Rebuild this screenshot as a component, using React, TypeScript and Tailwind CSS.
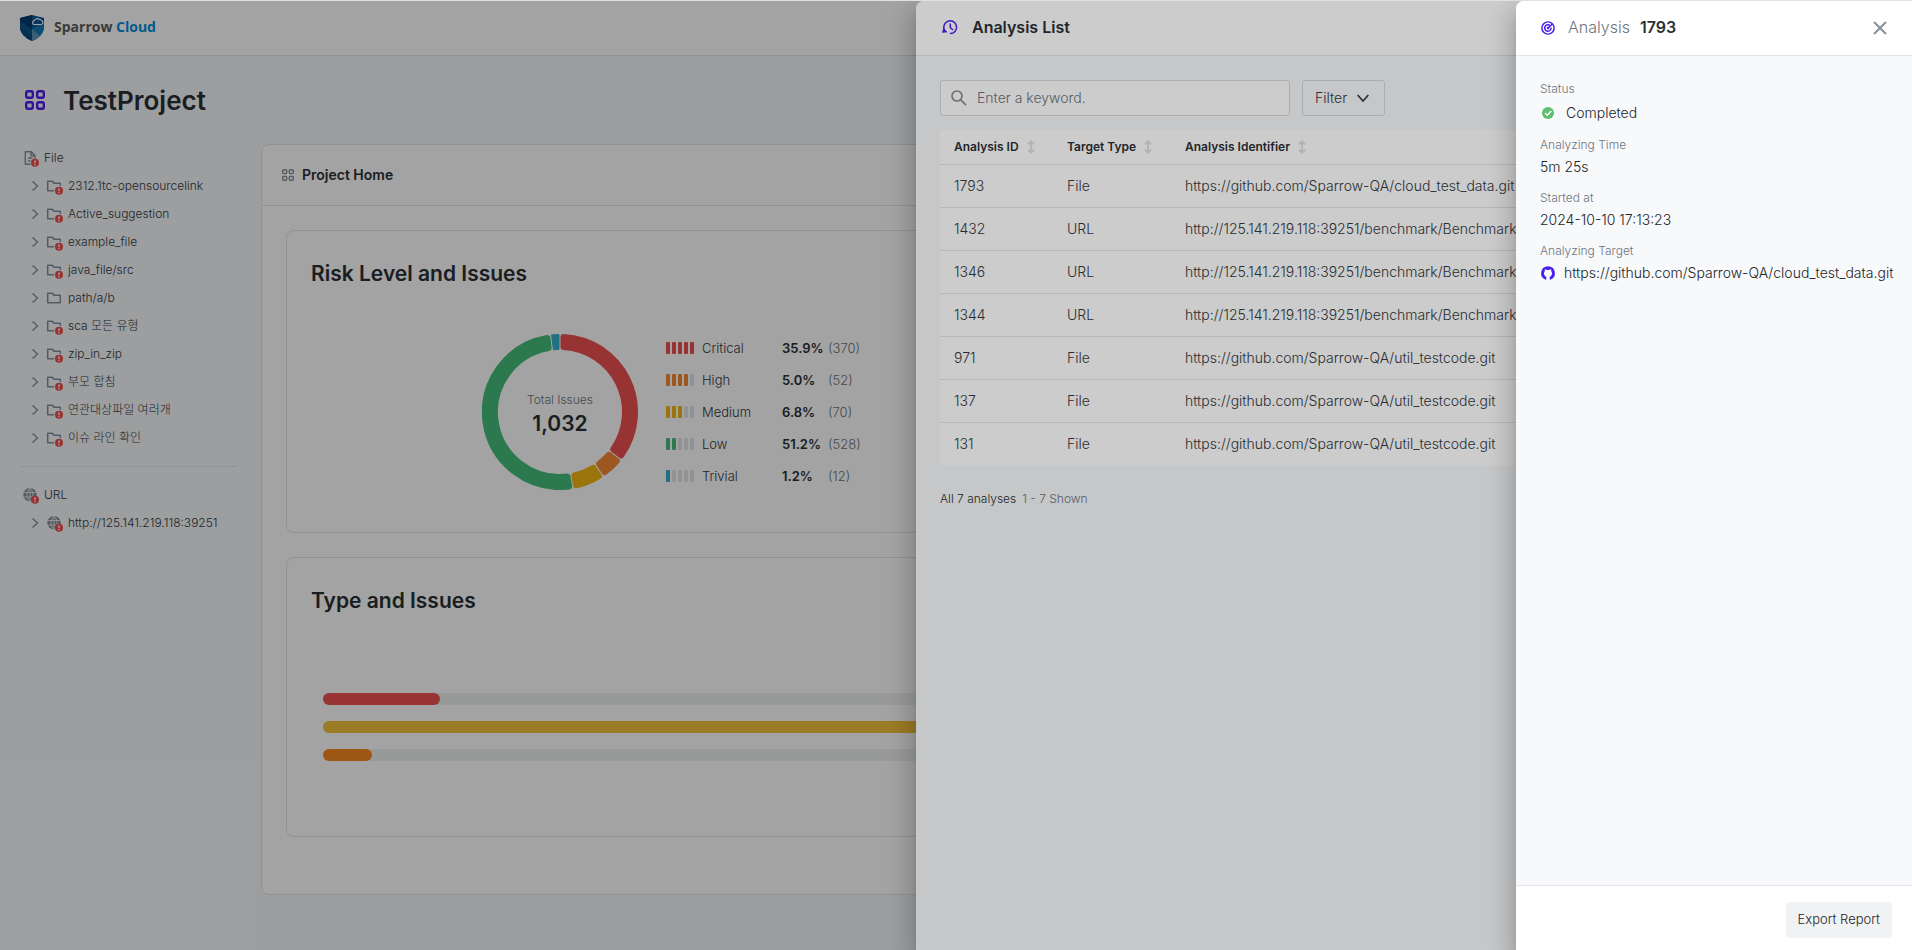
import React from 'react';

type Level = { name: string; pct: string; count: number; fill: number; color: string; bg: string };

const levels: Level[] = [
  { name: 'Critical', pct: '35.9%', count: 370, fill: 5, color: '#ef5152', bg: 'bg-[#ef5152]' },
  { name: 'High', pct: '5.0%', count: 52, fill: 4, color: '#f88935', bg: 'bg-[#f88935]' },
  { name: 'Medium', pct: '6.8%', count: 70, fill: 3, color: '#f3b814', bg: 'bg-[#f3b814]' },
  { name: 'Low', pct: '51.2%', count: 528, fill: 2, color: '#47bf7c', bg: 'bg-[#47bf7c]' },
  { name: 'Trivial', pct: '1.2%', count: 12, fill: 1, color: '#35b2cd', bg: 'bg-[#35b2cd]' },
];

const folders = [
  { name: '2312.1tc-opensourcelink', alert: true },
  { name: 'Active_suggestion', alert: true },
  { name: 'example_file', alert: true },
  { name: 'java_file/src', alert: true },
  { name: 'path/a/b', alert: false },
  { name: 'sca 모든 유형', alert: true },
  { name: 'zip_in_zip', alert: true },
  { name: '부모 합침', alert: true },
  { name: '연관대상파일 여러개', alert: true },
  { name: '이슈 라인 확인', alert: true },
];

const analyses = [
  { id: 1793, type: 'File', target: 'https://github.com/Sparrow-QA/cloud_test_data.git' },
  { id: 1432, type: 'URL', target: 'http://125.141.219.118:39251/benchmark/BenchmarkT' },
  { id: 1346, type: 'URL', target: 'http://125.141.219.118:39251/benchmark/BenchmarkT' },
  { id: 1344, type: 'URL', target: 'http://125.141.219.118:39251/benchmark/BenchmarkT' },
  { id: 971, type: 'File', target: 'https://github.com/Sparrow-QA/util_testcode.git' },
  { id: 137, type: 'File', target: 'https://github.com/Sparrow-QA/util_testcode.git' },
  { id: 131, type: 'File', target: 'https://github.com/Sparrow-QA/util_testcode.git' },
];

function Logo() {
  return (
    <svg viewBox="0 0 24 26" className="h-[26px] w-6" aria-hidden="true">
      <path d="M12 0 24 3v9c0 6-5 11-12 14C5 23 0 18 0 12V3z" fill="#0a5796" />
      <path d="M12 0v14L0 6V3z" fill="#053c6d" />
      <path d="M12 14 24 7v5c0 6-5 11-12 14z" fill="#1379b8" />
      <path d="M0 6l12 8v12C5 23 0 18 0 12z" fill="#074a80" />
      <path d="M12 14l8 7c-2 2-5 4-8 5z" fill="#5f93b5" />
      <path d="M1 8l11 9M1 11l10 8" stroke="#2b79ac" strokeWidth=".6" />
      <path d="M14 9.500h7a2 2 0 0 0 .5-3.900 2.300 2.300 0 0 0-2.500-1.300 3 3 0 0 0-4.700 1.300 2 2 0 0 0-.3 3.900z" fill="#0a5796" stroke="#fff" strokeWidth="1.100" />
    </svg>
  );
}

function GridIcon({ className, width }: { className: string; width: number }) {
  return (
    <svg viewBox="0 0 20 20" fill="none" stroke="currentColor" strokeWidth={width} className={className} aria-hidden="true">
      <rect x="1.200" y="1.200" width="6.600" height="6.600" rx="1.800" />
      <rect x="12.200" y="1.200" width="6.600" height="6.600" rx="1.800" />
      <rect x="1.200" y="12.200" width="6.600" height="6.600" rx="1.800" />
      <rect x="12.200" y="12.200" width="6.600" height="6.600" rx="1.800" />
    </svg>
  );
}

function Alert({ x }: { x: number }) {
  return (
    <g>
      <circle cx={x} cy="12.800" r="4" fill="#f04a4b" />
      <path d={`M${x} 10.300v3M${x} 14v1.200`} stroke="#fff" strokeWidth="1.300" />
    </g>
  );
}

function FolderIcon({ alert }: { alert: boolean }) {
  return (
    <svg viewBox="0 0 16 16" fill="none" className="size-4 overflow-visible text-[#868e96]" aria-hidden="true">
      {alert ? (
        <path d="M8 12.800H1.700V3.200h4.600l1.500 2.100h6.500v2.500" stroke="currentColor" strokeWidth="1.500" strokeLinejoin="round" />
      ) : (
        <path d="M1.700 3.200h4.600l1.500 2.100h6.500v7.500H1.700z" stroke="currentColor" strokeWidth="1.500" strokeLinejoin="round" />
      )}
      {alert && <Alert x={13} />}
    </svg>
  );
}

function FileIcon() {
  return (
    <svg viewBox="0 0 16 16" fill="none" className="size-4 overflow-visible text-[#868e96]" aria-hidden="true">
      <path d="M6.500 14.300H1.300V1.800h6L11 5.500v3M7 1.800v4h4M4 8h4.500M4 11h2.500" stroke="currentColor" strokeWidth="1.400" strokeLinejoin="round" />
      <Alert x={11} />
    </svg>
  );
}

function GlobeIcon({ x }: { x: number }) {
  return (
    <svg viewBox="0 0 16 16" fill="none" className="size-4 overflow-visible text-[#868e96]" aria-hidden="true">
      <g transform={`translate(${x - 5} 0)`}>
        <circle cx="0" cy="7.800" r="6.700" fill="currentColor" />
        <path d="M-6 5.500H6M-6 10H6M0 1v13.500M0 1.200c-4 3-4 10.200 0 13.300M0 1.200c4 3 4 10.200 0 13.300" stroke="#f6f8fa" strokeWidth=".8" />
      </g>
      <Alert x={x} />
    </svg>
  );
}

function Chevron({ className }: { className: string }) {
  return (
    <svg viewBox="0 0 10 10" fill="none" stroke="currentColor" strokeWidth="1.400" className={className} aria-hidden="true">
      <path d="M2.500.5 7.500 5 2.500 9.500" />
    </svg>
  );
}

function SortIcon() {
  return (
    <svg viewBox="0 0 8 14" fill="none" stroke="currentColor" strokeWidth="1.900" className="h-3.5 w-2 text-[#dee1e5]" aria-hidden="true">
      <path d="M4 1.500v11M1 4.300l3-3 3 3M1 9.700l3 3 3-3" />
    </svg>
  );
}

const C = 78;
function polar(r: number, deg: number) {
  const a = ((deg - 90) * Math.PI) / 180;
  return `${(C + r * Math.cos(a)).toFixed(2)} ${(C + r * Math.sin(a)).toFixed(2)}`;
}

/* Ring segment drawn inset by the corner radius and grown back by a round stroke. */
function segment(start: number, end: number, round: number) {
  const ro = 78 - round;
  const ri = 62 + round;
  const inset = (r: number) => (((round + 0.5) / r) * 180) / Math.PI;
  const large = (r: number) => (end - start - 2 * inset(r) > 180 ? 1 : 0);
  return `M${polar(ro, start + inset(ro))}A${ro} ${ro} 0 ${large(ro)} 1 ${polar(ro, end - inset(ro))}L${polar(ri, end - inset(ri))}A${ri} ${ri} 0 ${large(ri)} 0 ${polar(ri, start + inset(ri))}Z`;
}

/* Small shares are widened to a minimum angle so that they stay visible. */
const MIN_ANGLE = 7;

function Donut() {
  const total = levels.reduce((n, l) => n + l.count, 0);
  const raw = levels.map((l) => Math.max((l.count / total) * 360, MIN_ANGLE));
  const sum = raw.reduce((n, a) => n + a, 0);
  let at = 0;
  return (
    <svg viewBox="0 0 156 156" className="size-[156px]" role="img" aria-label="Total Issues 1,032">
      {levels.map((l, i) => {
        const start = at;
        at += (raw[i] / sum) * 360;
        const round = l.count < 20 ? 0.5 : 3;
        return (
          <path key={l.name} d={segment(start, at, round)} fill={l.color} stroke={l.color} strokeWidth={round * 2} strokeLinejoin="round" />
        );
      })}
    </svg>
  );
}

function Sidebar() {
  return (
    <nav className="flex w-[217px] shrink-0 flex-col text-xs font-light text-[#343a40]">
      <div className="flex h-7 items-center gap-1 pl-1">
        <FileIcon />
        <span>File</span>
      </div>
      <ul>
        {folders.map((f) => (
          <li key={f.name}>
            <a href="#" className="flex h-7 items-center pl-2.5">
              <Chevron className="mr-1.5 size-2.5 text-[#868e96]" />
              <FolderIcon alert={f.alert} />
              <span className="ml-1.5">{f.name}</span>
            </a>
          </li>
        ))}
      </ul>
      <hr className="my-3.5 border-[#e3e5e8]" />
      <div className="flex h-7 items-center gap-1 pl-1">
        <GlobeIcon x={11} />
        <span>URL</span>
      </div>
      <a href="#" className="flex h-7 items-center pl-2.5">
        <Chevron className="mr-1.5 size-2.5 text-[#868e96]" />
        <GlobeIcon x={13} />
        <span className="ml-1.5">http://125.141.219.118:39251</span>
      </a>
    </nav>
  );
}

function ProjectPage() {
  return (
    <div className="flex min-h-screen flex-col bg-[#f6f8fa] pb-[55px]">
      <header className="flex h-14 items-center gap-2.5 border-b border-[#e3e5e8] bg-white pl-5">
        <Logo />
        <span className="pb-0.5 font-['Open_Sans',sans-serif] text-sm font-bold text-[#5c5c5c]">
          Sparrow <span className="text-[#0090dc]">Cloud</span>
        </span>
      </header>
      <div className="flex h-[88px] items-center gap-[18px] pl-[25px]">
        <GridIcon className="size-5 text-[#4c1ff0]" width={2.4} />
        <h1 className="text-[26px] font-semibold text-[#2b3035]">TestProject</h1>
      </div>
      <div className="flex flex-1 gap-6 pl-5">
        <Sidebar />
        <main className="min-w-0 flex-1 rounded-l-lg border border-[#e3e5e8] bg-white">
          <div className="flex h-[61px] items-center gap-2 border-b border-[#e3e5e8] pl-5">
            <GridIcon className="size-3 text-[#868e96]" width={2.3} />
            <h2 className="text-sm font-semibold text-[#2b3035]">Project Home</h2>
          </div>
          <div className="flex flex-col gap-6 p-6">
            <section className="h-[303px] rounded-lg border border-[#e3e5e8] px-6 pt-[27px]">
              <h3 className="text-[21px] leading-8 font-semibold text-[#2b3035]">Risk Level and Issues</h3>
              <div className="mt-[42px] flex items-center gap-7 pl-[171px]">
                <div className="grid size-[156px] place-items-center">
                  <div className="col-start-1 row-start-1"><Donut /></div>
                  <div className="col-start-1 row-start-1 pt-1 text-center">
                    <p className="text-xs leading-5 font-light text-[#6c757d]">Total Issues</p>
                    <p className="text-[21px] leading-7 font-semibold text-[#2b3035]">1,032</p>
                  </div>
                </div>
                <ul className="text-[13px] leading-8 font-light text-[#343a40]">
                  {levels.map((l) => (
                    <li key={l.name} className="flex items-center">
                      <span className="flex gap-0.5">
                        {[0, 1, 2, 3, 4].map((i) => (
                          <span key={i} className={`h-3 w-1 rounded-[1px] ${i < l.fill ? l.bg : 'bg-[#e3e5e8]'}`} />
                        ))}
                      </span>
                      <span className="ml-2 w-20">{l.name}</span>
                      <span className="w-[46px] font-semibold text-[#2b3035]">{l.pct}</span>
                      <span className="text-[#6c757d]">({l.count})</span>
                    </li>
                  ))}
                </ul>
              </div>
            </section>
            <section className="h-[280px] rounded-lg border border-[#e3e5e8] px-6 pt-[27px]">
              <h3 className="text-[21px] leading-8 font-semibold text-[#2b3035]">Type and Issues</h3>
              <div className="mt-[76px] flex flex-col gap-4 px-3">
                <div className="h-3 rounded-md bg-[#eff2f0]"><div className="h-3 w-[117px] rounded-md bg-[#ef5152]" /></div>
                <div className="h-3 rounded-md bg-[#eff2f0]"><div className="h-3 w-3/4 rounded-md bg-[#f3c23d]" /></div>
                <div className="h-3 rounded-md bg-[#eff2f0]"><div className="h-3 w-[49px] rounded-md bg-[#f88720]" /></div>
              </div>
            </section>
          </div>
        </main>
      </div>
    </div>
  );
}

const drawerShadow = 'shadow-[0_8px_10px_-5px_rgba(0,0,0,0.2),0_16px_24px_2px_rgba(0,0,0,0.14),0_6px_30px_5px_rgba(0,0,0,0.12)]';

function AnalysisList() {
  return (
    <section className={`ml-auto flex h-full w-[996px] flex-col overflow-hidden rounded-tl-lg bg-[#f8f9fb] ${drawerShadow}`}>
      <header className="flex h-[55px] shrink-0 items-center gap-3.5 border-b border-[#e3e5e8] bg-white pb-0.5 pl-[26px]">
        <svg viewBox="0 0 16 16" fill="none" stroke="currentColor" strokeWidth="1.500" className="size-4 text-[#4c1ff0]" aria-hidden="true">
          <path d="M2.700 11.500A6.400 6.400 0 1 1 8 14.600" />
          <path d="M0 13.800 1.400 9 5.600 13.200z" fill="currentColor" stroke="none" />
          <path d="M8.300 4.500V8.500L11 11" />
        </svg>
        <h2 className="text-base font-semibold text-[#2b3035]">Analysis List</h2>
      </header>
      <div className="flex flex-col px-6 pt-6">
        <div className="flex gap-3">
          <label className="flex h-9 w-[350px] items-center gap-2 rounded-[3px] border border-[#d5d9dd] bg-white pl-2">
            <svg viewBox="0 0 16 16" fill="none" stroke="currentColor" strokeWidth="1.700" className="mx-0.5 size-4 text-[#868e96]" aria-hidden="true">
              <circle cx="6" cy="6" r="5" />
              <path d="m9.800 9.800 5.200 5.400" />
            </svg>
            <input aria-label="Keyword" placeholder="Enter a keyword." className="min-w-0 flex-1 bg-transparent text-sm font-light outline-none placeholder:text-[#6c757d]" />
          </label>
          <button type="button" className="flex h-9 w-[83px] items-center justify-between rounded-[3px] border border-[#d5d9dd] pr-[15px] pl-3 text-sm font-light text-[#343a40]">
            Filter
            <Chevron className="size-3 rotate-90" />
          </button>
        </div>
        <table className="mt-3.5 w-full table-fixed border-collapse bg-white text-left text-[#343a40]">
          <colgroup>
            <col className="w-[113px]" />
            <col className="w-[118px]" />
            <col />
          </colgroup>
          <thead>
            <tr className="h-[34px] border-b border-[#e3e5e8] text-xs text-[#2b3035]">
              {['Analysis ID', 'Target Type', 'Analysis Identifier'].map((h) => (
                <th key={h} scope="col" className="pl-3.5 font-semibold whitespace-nowrap">
                  <span className="flex items-center gap-2">{h}<SortIcon /></span>
                </th>
              ))}
            </tr>
          </thead>
          <tbody className="text-sm font-light">
            {analyses.map((a) => (
              <tr key={a.id} className="h-[43px] border-b border-[#e3e5e8] last:border-b-0">
                <td className="pl-3.5">{a.id}</td>
                <td className="pl-3.5">{a.type}</td>
                <td className="pl-3.5 whitespace-nowrap">{a.target}</td>
              </tr>
            ))}
          </tbody>
        </table>
        <p className="mt-6 flex gap-1.5 text-xs leading-5 font-light text-[#6c757d]">
          <span className="text-[#2b3035]">All 7 analyses</span>
          <span>1 - 7 Shown</span>
        </p>
      </div>
    </section>
  );
}

function Field({ label, children }: { label: string; children: React.ReactNode }) {
  return (
    <div className="flex flex-col gap-0.5">
      <dt className="text-xs leading-4 font-light text-[#6c757d]">{label}</dt>
      <dd className="flex items-center text-sm leading-6 font-light whitespace-nowrap text-[#212529]">{children}</dd>
    </div>
  );
}

function AnalysisDetail() {
  return (
    <section className={`ml-auto flex h-full w-[396px] flex-col overflow-hidden rounded-tl-lg bg-[#f8f9fb] ${drawerShadow}`}>
      <header className="flex h-[55px] shrink-0 items-center border-b border-[#e3e5e8] bg-white px-[25px]">
        <svg viewBox="0 0 16 16" fill="none" stroke="currentColor" strokeWidth="1.700" className="size-3.5 text-[#4c1ff0]" aria-hidden="true">
          <circle cx="8" cy="8" r="7" />
          <path d="M10.300 5.200A3.700 3.700 0 1 0 11.500 7.500" />
          <path d="M7.500 8.500 13 3.500" />
          <circle cx="8" cy="8" r=".7" />
        </svg>
        <h2 className="ml-[13px] flex gap-2.5 pb-0.5 text-base font-light text-[#6c757d]">
          Analysis <span className="font-semibold text-[#2b3035]">1793</span>
        </h2>
        <button type="button" aria-label="Close" className="ml-auto text-[#868e96]">
          <svg viewBox="0 0 14 14" stroke="currentColor" strokeWidth="2" className="size-3.5" aria-hidden="true">
            <path d="m1 1 12 12M13 1 1 13" />
          </svg>
        </button>
      </header>
      <dl className="flex flex-1 flex-col gap-[11px] px-6 pt-[25px]">
        <Field label="Status">
          <span className="flex h-[27px] items-center gap-2.5">
            <svg viewBox="0 0 16 16" className="size-4 shrink-0" aria-hidden="true">
              <circle cx="8" cy="8" r="6" fill="#5fbe70" />
              <path d="m5 8 2.300 2.300L11.300 6" fill="none" stroke="#fff" strokeWidth="1.400" />
            </svg>
            Completed
          </span>
        </Field>
        <Field label="Analyzing Time">5m 25s</Field>
        <Field label="Started at">2024-10-10 17:13:23</Field>
        <Field label="Analyzing Target">
          <svg viewBox="0 0 16 16" fill="none" className="size-4 shrink-0 text-[#4c1ff0]" aria-hidden="true">
            <path fill="currentColor" d="M8 1.200a7 7 0 0 0-2.200 13.600c.4 0 .5-.2.500-.4v-2.600C4.500 11 4 9.700 4 8.200c0-.8.300-1.500.8-2-.1-.4-.2-1 .1-1.900.7 0 1.400.4 1.900.8a7 7 0 0 1 2.400 0c.5-.4 1.200-.8 1.900-.8.300.9.200 1.500.1 1.900.5.500.8 1.200.8 2 0 1.500-.5 2.800-2.300 3.600v2.600c0 .2.100.4.500.4A7 7 0 0 0 8 1.200z" />
          </svg>
          <span className="ml-2">https://github.com/Sparrow-QA/cloud_test_data.git</span>
        </Field>
      </dl>
      <footer className="flex h-[65px] shrink-0 items-start justify-end border-t border-[#e3e5e8] bg-white pt-4 pr-5">
        <button type="button" className="h-9 rounded bg-[#f1f2f4] px-3 text-[13px] font-light text-[#212529]">Export Report</button>
      </footer>
    </section>
  );
}

export default function App() {
  return (
    <div className="relative min-h-screen overflow-hidden font-['Inter','Noto_Sans_CJK_KR',sans-serif]">
      <ProjectPage />
      <div className="absolute inset-0 bg-black/20 pt-px"><AnalysisList /></div>
      <div className="absolute inset-0 bg-black/20 pt-px"><AnalysisDetail /></div>
      <div className="absolute inset-x-0 top-0 h-px bg-[#dfe1e1]" />
    </div>
  );
}
